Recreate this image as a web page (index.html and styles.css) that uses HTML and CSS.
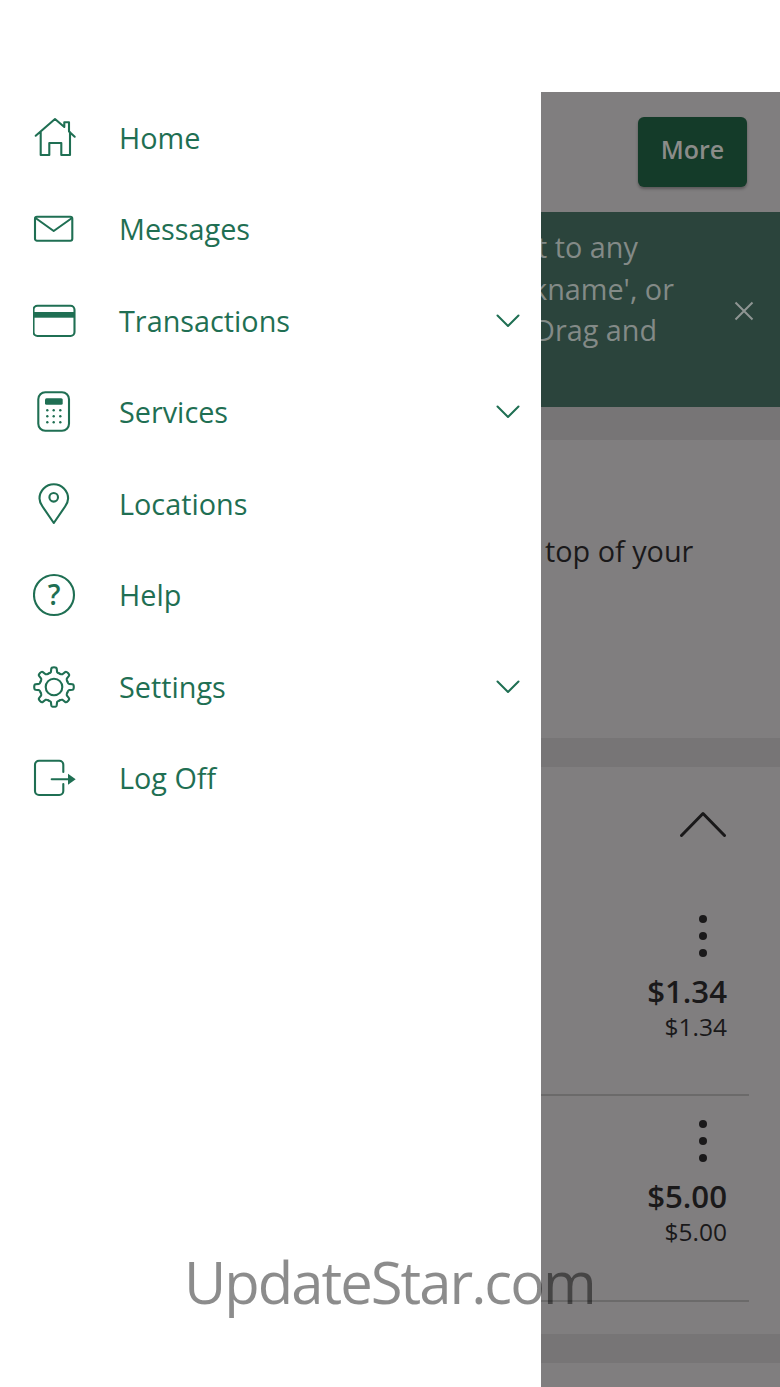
FILE: index.html
```html
<!DOCTYPE html>
<html lang="en">
<head>
  <meta charset="UTF-8">
  <title>Accounts</title>
  <meta name="viewport" content="width=device-width, initial-scale=1.0">
  <link rel="stylesheet" href="styles.css">
</head>
<body>
  <div class="screen">
    <!-- Side menu -->
    <nav class="drawer">
      <a class="menu-item">
        <svg class="menu-icon" viewBox="0 0 44 44"><path d="M2.7 19.7L22 3l9.3 8V6.3H36v9.2l5.7 5.2M7.7 16v23h8.6V27h12v12H37V16"/></svg>
        <span class="menu-label">Home</span>
      </a>
      <a class="menu-item">
        <svg class="menu-icon" viewBox="0 0 44 44"><rect x="2" y="9.7" width="37.3" height="24" rx="2"/><path d="M2.5 11l18.2 13L39 11"/></svg>
        <span class="menu-label">Messages</span>
      </a>
      <a class="menu-item">
        <svg class="menu-icon" viewBox="0 0 44 44"><rect x="0.5" y="6.7" width="41" height="30.3" rx="4"/><rect class="solid" x="0.5" y="13" width="41" height="5.7"/></svg>
        <span class="menu-label">Transactions</span>
        <svg class="menu-chevron" viewBox="0 0 24 14"><path d="M1.5 1.5L12 12 22.500 1.500"/></svg>
      </a>
      <a class="menu-item">
        <svg class="menu-icon" viewBox="0 0 44 44">
          <rect x="5.300" y="2.300" width="30.700" height="38.400" rx="7"/>
          <rect class="solid" x="12" y="8.300" width="17.700" height="6.400" rx="1.500"/>
          <g class="solid">
            <circle cx="14.300" cy="20.300" r="1.200"/><circle cx="20.700" cy="20.300" r="1.200"/><circle cx="27.300" cy="20.300" r="1.200"/>
            <circle cx="14.300" cy="26.300" r="1.200"/><circle cx="20.700" cy="26.300" r="1.200"/><circle cx="27.300" cy="26.300" r="1.200"/>
            <circle cx="14.300" cy="32.300" r="1.200"/><circle cx="20.700" cy="32.300" r="1.200"/><circle cx="27.300" cy="32.300" r="1.200"/>
          </g>
        </svg>
        <span class="menu-label">Services</span>
        <svg class="menu-chevron" viewBox="0 0 24 14"><path d="M1.5 1.5L12 12 22.500 1.500"/></svg>
      </a>
      <a class="menu-item">
        <svg class="menu-icon" viewBox="0 0 44 44"><path d="M20.800 41L9.500 24.500C7.500 21.500 6.500 19.500 6.500 16.500a14.300 14.300 0 0 1 28.600 0c0 3-1 5-3 8z"/><circle cx="20.700" cy="15.300" r="4.300"/></svg>
        <span class="menu-label">Locations</span>
      </a>
      <a class="menu-item">
        <svg class="menu-icon" viewBox="0 0 44 44"><circle cx="21" cy="22" r="20"/><text class="help-mark" x="21" y="32">?</text></svg>
        <span class="menu-label">Help</span>
      </a>
      <a class="menu-item">
        <svg class="menu-icon" viewBox="0 0 44 44">
          <defs><path id="gearTooth" d="M15.450 8.600Q17.500 8 17.900 7L18.300 3.600Q18.500 2.200 21 2.200T23.700 3.600L24.100 7Q24.500 8 26.550 8.600"/></defs>
          <use href="#gearTooth"/>
          <use href="#gearTooth" transform="rotate(45 21 22)"/>
          <use href="#gearTooth" transform="rotate(90 21 22)"/>
          <use href="#gearTooth" transform="rotate(135 21 22)"/>
          <use href="#gearTooth" transform="rotate(180 21 22)"/>
          <use href="#gearTooth" transform="rotate(225 21 22)"/>
          <use href="#gearTooth" transform="rotate(270 21 22)"/>
          <use href="#gearTooth" transform="rotate(315 21 22)"/>
          <circle cx="21" cy="22" r="8.300"/>
        </svg>
        <span class="menu-label">Settings</span>
        <svg class="menu-chevron" viewBox="0 0 24 14"><path d="M1.5 1.5L12 12 22.500 1.500"/></svg>
      </a>
      <a class="menu-item">
        <svg class="menu-icon" viewBox="0 0 44 44"><path d="M30.300 16V8.700a4 4 0 0 0-4-4H6a4 4 0 0 0-4 4V35a4 4 0 0 0 4 4h20.300a4 4 0 0 0 4-4v-7M18.700 23.300H36"/><path class="solid" d="M35 17.800l7.700 5.500-7.700 5.500z"/></svg>
        <span class="menu-label">Log Off</span>
      </a>
    </nav>

    <!-- Accounts page, dimmed behind the menu -->
    <main class="page">
      <header class="page-head">
        <button class="more-btn">More</button>
      </header>

      <section class="tip">
        <div class="tip-text">
          <p class="tip-line first">t to any</p>
          <p class="tip-line second">kname', or</p>
          <p class="tip-line third">Drag and</p>
        </div>
        <svg class="tip-close" viewBox="0 0 20 20"><path d="M1.500 1.500l17 17M18.500 1.500l-17 17"/></svg>
      </section>

      <div class="band"></div>

      <section class="card intro">
        <p class="intro-text">top of your</p>
      </section>

      <div class="band slim"></div>

      <section class="card accounts">
        <svg class="collapse" viewBox="0 0 46 26"><path d="M1.500 24.500L23 2.500l21.500 22"/></svg>

        <div class="account">
          <div class="dots"><i></i><i></i><i></i></div>
          <div class="balance">$1.34</div>
          <div class="available">$1.34</div>
        </div>
        <div class="account">
          <div class="dots"><i></i><i></i><i></i></div>
          <div class="balance">$5.00</div>
          <div class="available">$5.00</div>
        </div>
      </section>

      <div class="band slim"></div>
    </main>
  </div>

  <div class="watermark">UpdateStar.com</div>
</body>
</html>
```

FILE: styles.css
```css
:root {
  --green: #1f6f53;
  --page: #807e7f;
  --band: #777576;
  --ink: #1a191a;
}

html, body {
  margin: 0;
  padding: 0;
}
body {
  width: 780px;
  height: 1387px;
  overflow: hidden;
  position: relative;
  background: #fff;
  font-family: 'Open Sans', 'Noto Sans', sans-serif;
}
p {
  margin: 0;
}

.screen {
  display: flex;
  height: 100%;
}

/* side menu */
.drawer {
  width: 541px;
  flex: none;
  padding-top: 92px;
  box-sizing: border-box;
  background: #fff;
}
.menu-item {
  display: flex;
  align-items: center;
  height: 91.5px;
  padding-left: 33px;
  color: var(--green);
}
.menu-icon {
  width: 44px;
  height: 44px;
  flex: none;
  margin-right: 42px;
  fill: none;
  stroke: var(--green);
  stroke-width: 2.1;
  stroke-linejoin: round;
  stroke-linecap: round;
}
.menu-icon .solid {
  fill: var(--green);
  stroke: none;
}
.help-mark {
  font-size: 28px;
  font-weight: 600;
  text-anchor: middle;
  fill: var(--green);
  stroke: none;
}
.menu-label {
  flex: 1;
  font-size: 28.8px;
  line-height: 38px;
}
.menu-chevron {
  width: 24px;
  height: 14px;
  flex: none;
  margin-right: 21px;
  fill: none;
  stroke: var(--green);
  stroke-width: 2;
  stroke-linecap: round;
  stroke-linejoin: round;
}

/* page behind the menu */
.page {
  flex: 1;
  min-width: 0;
  margin-top: 92px;
  overflow: hidden;
  background: var(--page);
}
.page-head {
  display: flex;
  justify-content: flex-end;
  height: 120px;
  padding: 25px 33px 0 0;
  box-sizing: border-box;
}
.more-btn {
  width: 109px;
  height: 70px;
  padding: 0 0 7px;
  border: none;
  border-radius: 6px;
  background: #143b29;
  color: #8b8c89;
  font-family: inherit;
  font-size: 25px;
  font-weight: 600;
  box-shadow: 0 2px 3px rgba(0,0,0,0.3);
}

.tip {
  display: flex;
  height: 195px;
  padding-top: 14px;
  box-sizing: border-box;
  background: #2b443c;
  color: #838a87;
}
.tip-text {
  flex: 1;
  min-width: 0;
  overflow: hidden;
  white-space: nowrap;
}
.tip-line {
  font-size: 28.8px;
  line-height: 41.500px;
}
.tip-line.first { margin-left: -4px; }
.tip-line.second { margin-left: -9px; }
.tip-line.third { margin-left: -7px; }
.tip-close {
  width: 20px;
  height: 20px;
  flex: none;
  margin: 75px 26px 0 0;
  fill: none;
  stroke: #8f9593;
  stroke-width: 2;
}

.band {
  height: 33px;
  background: var(--band);
}
.band.slim {
  height: 29px;
}

.intro {
  height: 298px;
  padding-top: 91px;
  box-sizing: border-box;
}
.intro-text {
  margin-left: 4px;
  font-size: 28.8px;
  line-height: 40px;
  color: var(--ink);
}

.accounts {
  height: 567px;
  padding-top: 44px;
  box-sizing: border-box;
}
.collapse {
  display: block;
  width: 46px;
  height: 26px;
  margin-left: 139px;
  fill: none;
  stroke: var(--ink);
  stroke-width: 3;
  stroke-linecap: round;
  stroke-linejoin: round;
}
.account {
  height: 206px;
  margin-right: 31px;
  display: flex;
  flex-direction: column;
  align-items: flex-end;
  padding-right: 22px;
  border-bottom: 2px solid #6b6a6a;
  box-sizing: border-box;
  color: var(--ink);
}
.account:first-of-type {
  height: 259px;
  padding-top: 78px;
}
.account + .account {
  padding-top: 24px;
}
.dots {
  display: flex;
  flex-direction: column;
  gap: 9px;
  margin-right: 20px;
}
.dots i {
  width: 8px;
  height: 8px;
  border-radius: 50%;
  background: var(--ink);
}
.balance {
  margin-top: 14px;
  font-size: 31.2px;
  line-height: 40px;
  font-weight: 600;
}
.available {
  font-size: 24.5px;
  line-height: 32px;
}

/* site stamp over everything */
.watermark {
  position: absolute;
  left: 184px;
  top: 1243px;
  font-size: 58px;
  line-height: 78px;
  letter-spacing: -2px;
  font-weight: 400;
  color: rgba(0,0,0,0.45);
  white-space: nowrap;
}
```
